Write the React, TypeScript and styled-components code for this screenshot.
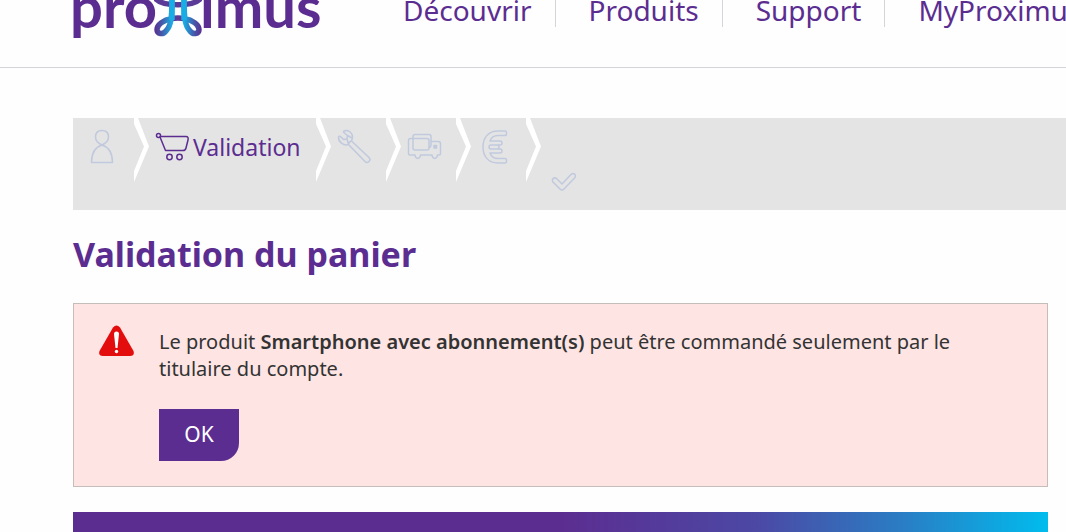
import React from "react";
import styled, { createGlobalStyle } from "styled-components";

const purple = "#5c2d91";

const GlobalStyle = createGlobalStyle`
  *, *::before, *::after { box-sizing: border-box; }
  body {
    margin: 0;
    background: #fefefe;
    color: #333;
    font-family: "Noto Sans", "Open Sans", sans-serif;
    overflow-x: hidden;
  }
`;

const Page = styled.div`
  overflow: hidden;
`;

const Header = styled.header`
  display: flex;
  align-items: flex-start;
  height: 100px;
  margin-top: -32px;
  padding: 28px 0 0 70px;
  border-bottom: 1px solid #d3d5da;
`;

const Logo = styled.a`
  display: flex;
  flex: none;
  width: 300px;
  color: ${purple};
  font-family: Lato, "Noto Sans", sans-serif;
  font-size: 58px;
  font-weight: 700;
  line-height: 20px;
  text-decoration: none;

  svg { flex: none; margin: 4px -2px 0 -3px; }
`;

const NavList = styled.ul`
  display: flex;
  margin: 0;
  padding: 0;
  list-style: none;
`;

const NavItem = styled.li`
  padding: 0 23px 3px 33px;
  border-right: 1px solid #d3d5da;
`;

const NavLink = styled.a`
  display: block;
  color: ${purple};
  font-size: 28px;
  line-height: 28px;
  white-space: nowrap;
  text-decoration: none;
`;

const Main = styled.main`
  padding: 50px 0 0 73px;
`;

const Steps = styled.ol`
  display: flex;
  height: 92px;
  margin: 0;
  padding: 0;
  list-style: none;
  background: #e4e4e4;
`;

const Step = styled.li<{ $active?: boolean; $first?: boolean; $last?: boolean }>`
  display: flex;
  align-items: flex-start;
  justify-content: space-between;
  flex: none;
  min-width: ${(p) => (p.$first ? 76 : 70)}px;
  padding-left: ${(p) => (p.$first ? 12 : p.$last ? 10 : 6)}px;
  color: ${(p) => (p.$active ? purple : "#c0c9dd")};
`;

const StepLabel = styled.span`
  display: flex;
  align-items: center;
  gap: 2px;
  height: 58px;
  margin-right: 15px;
  font-size: 23px;
`;

const StepIcon = styled.svg<{ $low?: boolean }>`
  display: block;
  flex: none;
  margin-top: ${(p) => (p.$low ? 50 : 11)}px;
  fill: none;
  stroke: currentColor;
  stroke-width: 1.5;
  stroke-linejoin: round;
  stroke-linecap: round;

  ${StepLabel} & { margin-top: 0; }
`;

const Chevron = () => (
  <svg width="15" height="64" viewBox="0 0 15 64" aria-hidden="true">
    <path d="M0 0H4L15 28.5L0 64V53L10 28.5L0 6Z" fill="#fff" />
  </svg>
);

const Content = styled.div`
  padding-right: 18px;
`;

const Title = styled.h1`
  margin: 19px 0 24px;
  color: ${purple};
  font-size: 34px;
  font-weight: 700;
  line-height: 50px;
`;

const Alert = styled.section`
  display: flex;
  align-items: flex-start;
  gap: 24px;
  padding: 21px 24px 25px;
  border: 1px solid #c5bdb9;
  background: #fee5e4;

  > svg { flex: none; }
`;

const AlertBody = styled.div`
  padding-top: 3px;
  max-width: 800px;
`;

const Message = styled.p`
  margin: 0 0 27px;
  font-size: 20px;
  line-height: 27px;

  strong { font-weight: 600; }
`;

const Button = styled.button`
  min-width: 80px;
  height: 52px;
  padding: 0 24px 2px;
  border: 0;
  border-radius: 0 0 18px 0;
  background: ${purple};
  color: #fff;
  font: 400 21px/30px "Noto Sans", sans-serif;
  display: block;
`;

const Banner = styled.div`
  height: 20px;
  margin-top: 25px;
  background: linear-gradient(90deg, #5c2d91 50%, #4c48a4 70%, #2a7dc4 85%, #00bcee 100%);
`;

export default function App() {
  return (
    <Page>
      <GlobalStyle />
      <Header>
        <Logo href="#" aria-label="proximus">
          <span>pro</span>
          <svg width="48" height="38" viewBox="0 0 48 38" fill="none" aria-hidden="true">
            <defs>
              <linearGradient id="strand" x1="0" x2="48" y1="0" y2="0" gradientUnits="userSpaceOnUse">
                <stop offset="0" stopColor="#5c2d91" />
                <stop offset=".15" stopColor="#4854a6" />
                <stop offset=".38" stopColor="#19aee5" />
                <stop offset=".62" stopColor="#19aee5" />
                <stop offset=".85" stopColor="#4854a6" />
                <stop offset="1" stopColor="#5c2d91" />
              </linearGradient>
            </defs>
            <g strokeWidth="5.500">
              <path d="M1 -2C8 7 40 7 47 -2" stroke="#5c3a98" />
              <path d="M17 18.500Q24 17.500 31 18.500" stroke="#5c3a98" />
              <path d="M18 18.500C9 20 3 25 3 29.500C3 34 9 35 12 31C17 26 18 18 18 -2M30 18.500C39 20 45 25 45 29.500C45 34 39 35 36 31C31 26 30 18 30 -2" stroke="url(#strand)" />
              <path d="M18 -2V20M30 -2V20" stroke="#18ade4" />
            </g>
          </svg>
          <span>imus</span>
        </Logo>
        <nav>
          <NavList>
            {["Découvrir", "Produits", "Support", "MyProximus"].map((label) => (
              <NavItem key={label}><NavLink href="#">{label}</NavLink></NavItem>
            ))}
          </NavList>
        </nav>
      </Header>
      <Main>
        <Steps>
          <Step $first>
            <StepIcon width="34" height="36" viewBox="0 0 34 36">
              <path d="M17 16C12.500 14 10.500 11 10.500 8C10.500 4 13 1.500 17 1.500S23.500 4 23.500 8C23.500 11 21.500 14 17 16C10.500 18 6.500 24 6.500 33.500H27.500C27.500 24 23.500 18 17 16Z" />
            </StepIcon>
            <Chevron />
          </Step>
          <Step $active>
            <StepLabel>
              <StepIcon width="36" height="30" viewBox="0 0 36 30">
                <circle cx="3.500" cy="3.500" r="2" />
                <path d="M5.500 4.500H31C33 4.500 33.500 6 33 8L31 16Q30.500 18.500 28 18.500H10.500L5 5" />
                <circle cx="14.500" cy="25" r="2.700" />
                <circle cx="24.500" cy="25" r="2.700" />
              </StepIcon>
              Validation
            </StepLabel>
            <Chevron />
          </Step>
          <Step>
            <StepIcon width="36" height="36" viewBox="0 0 36 36">
              <path d="M7 2C11 .5 15.500 3.500 15.500 8C15.500 9.500 15 11 14.500 12L32 28.500Q34 30.500 32 32.500Q30 34.500 28 32.500L11.500 15.500C7 17 1.500 13.500 1.500 8.500C1.500 7 3 7 4 8L6.500 10.500L10 10L10.500 6.500L7.500 4Q6 3 7 2ZM11.500 15.500Q12 12.500 14.500 12M10.500 6.500L15 9M6.500 10.500L10 10L11.500 15.500" />
            </StepIcon>
            <Chevron />
          </Step>
          <Step>
            <StepIcon width="36" height="36" viewBox="0 0 36 36">
              <path d="M6 26H3Q1.500 26 1.500 24.500V11.500Q1.500 9.500 3.500 9.500H20Q22 9.500 22 11.500V19Q22 21 20 21H8Q6 21 6 19V7.500Q6 5.500 8 5.500H22Q24 5.500 24 7.500V12.500H31.500Q33.500 12.500 33.500 15V24.500Q33.500 26 32 26H30.500C30 30.500 25.500 30.500 25 26H13.500C13 30.500 8.500 30.500 8 26H6M22 19Q24 18 24 16V12.500" />
              <path d="M27 16.500H29.500V19H27Z" fill="currentColor" />
            </StepIcon>
            <Chevron />
          </Step>
          <Step>
            <StepIcon width="36" height="36" viewBox="0 0 36 36">
              <path d="M28 2H21C11 2 6 9 6 18S11 34 21 34H28Q29.500 34 29.500 32V31Q29.500 29.500 28 29.500H21C17 29.500 14 27 13 24H23Q25 24 25 22T23 20H14Q12 20 12 18T14 16H23Q25 16 25 14T23 12H13C14 9 17 6.500 21 6.500H28Q29.500 6.500 29.500 5V3.500Q29.500 2 28 2ZM14 16H20Q22 16 22 18T20 20" />
            </StepIcon>
            <Chevron />
          </Step>
          <Step $last>
            <StepIcon $low width="26" height="26" viewBox="0 0 26 26">
              <path d="M1.500 13Q1 11 3 10Q4.500 9.500 6 11L11 16L20 6.500Q22 4.500 24 6.500Q25 8 24 9.500L13 21Q11 23 9 21L2.500 14.500Q1.500 14 1.500 13Z" />
            </StepIcon>
          </Step>
        </Steps>
        <Content>
          <Title>Validation du panier</Title>
          <Alert role="alert">
            <svg width="37" height="32" viewBox="0 0 37 32" aria-hidden="true">
              <path d="M15 2.500Q18.500 -1.500 22 2.500L35.500 26Q37 31 32 31H5Q0 31 1.500 26Z" fill="#e30d0d" />
              <path d="M16 9Q16 6.500 18.500 6.500T21 9L19.500 23H17.500Z" fill="#fff" />
              <circle cx="18.500" cy="26.500" r="1.700" fill="#fff" />
            </svg>
            <AlertBody>
              <Message>
                Le produit <strong>Smartphone avec abonnement(s)</strong> peut être commandé seulement par le titulaire du compte.
              </Message>
              <Button type="button">OK</Button>
            </AlertBody>
          </Alert>
          <Banner />
        </Content>
      </Main>
    </Page>
  );
}
